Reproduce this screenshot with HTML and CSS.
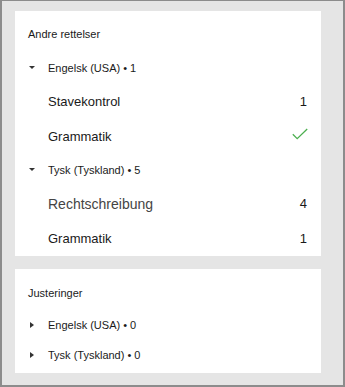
FILE: index.html
```html
<!DOCTYPE html>
<html lang="da">
<head>
    <meta charset="UTF-8">
    <meta name="viewport" content="width=device-width, initial-scale=1.0">
    <title>Korrekturer</title>
    <link rel="stylesheet" href="styles.css">
</head>
<body>
    <div class="pane">
        <div class="card">
            <div class="card-title">Andre rettelser</div>
            <div class="group">
                <div class="group-head"><span class="caret caret-down"></span>Engelsk (USA) • 1</div>
                <div class="item"><span>Stavekontrol</span><span class="count">1</span></div>
                <div class="item">
                    <span>Grammatik</span>
                    <svg class="check" width="16" height="12" viewBox="0 0 16 12">
                        <path d="M0.8 6.2 L5.2 10.6 L15.2 1" fill="none" stroke="#4caf50" stroke-width="1.3"/>
                    </svg>
                </div>
            </div>
            <div class="group">
                <div class="group-head"><span class="caret caret-down"></span>Tysk (Tyskland) • 5</div>
                <div class="item item-large"><span>Rechtschreibung</span><span class="count">4</span></div>
                <div class="item"><span>Grammatik</span><span class="count">1</span></div>
            </div>
        </div>

        <div class="card card-small">
            <div class="card-title">Justeringer</div>
            <div class="group-head"><span class="caret caret-right"></span>Engelsk (USA) • 0</div>
            <div class="group-head"><span class="caret caret-right"></span>Tysk (Tyskland) • 0</div>
        </div>
    </div>
</body>
</html>
```

FILE: styles.css
```css
body {
    margin: 0;
    font-family: "Liberation Sans", Arial, sans-serif;
    color: #1a1a1a;
}

.pane {
    width: 345px;
    height: 387px;
    box-sizing: border-box;
    background-color: #e5e5e5;
    border: 1px solid #8c8c8c;
    border-left-width: 2px;
    border-right-width: 2px;
    border-bottom-width: 2px;
    padding: 10px 22px 0 13px;
    display: flex;
    flex-direction: column;
    gap: 13px;
}

.card {
    background-color: #fff;
    padding: 11px 14px 0 13px;
    height: 245px;
    box-sizing: border-box;
}

.card-small {
    height: 104px;
    padding-top: 12px;
}

.card-title {
    height: 24px;
    line-height: 24px;
    font-size: 11px;
    margin-bottom: 6px;
}

.card-small .card-title {
    margin-bottom: 5px;
}

.group-head {
    height: 32px;
    display: flex;
    align-items: center;
    font-size: 11px;
}

.card-small .group-head {
    height: 30px;
}

.caret {
    width: 20px;
    flex: none;
    display: flex;
    align-items: center;
    padding-left: 1px;
    box-sizing: border-box;
    align-self: stretch;
}

.caret::before {
    content: "";
    display: block;
    width: 0;
    height: 0;
}

.caret-down::before {
    border-left: 3px solid transparent;
    border-right: 3px solid transparent;
    border-top: 3px solid #333;
    margin-top: -2px;
}

.caret-right::before {
    margin-left: 1px;
    border-top: 3px solid transparent;
    border-bottom: 3px solid transparent;
    border-left: 4px solid #333;
    margin-top: -1px;
}

.item {
    height: 35px;
    display: flex;
    align-items: center;
    justify-content: space-between;
    padding-left: 20px;
    font-size: 13px;
}

.item-large {
    font-size: 14px;
    color: #444;
}

.count {
    font-size: 13px;
    color: #1a1a1a;
}

.check {
    margin-top: -5px;
    margin-right: -1px;
}
```
